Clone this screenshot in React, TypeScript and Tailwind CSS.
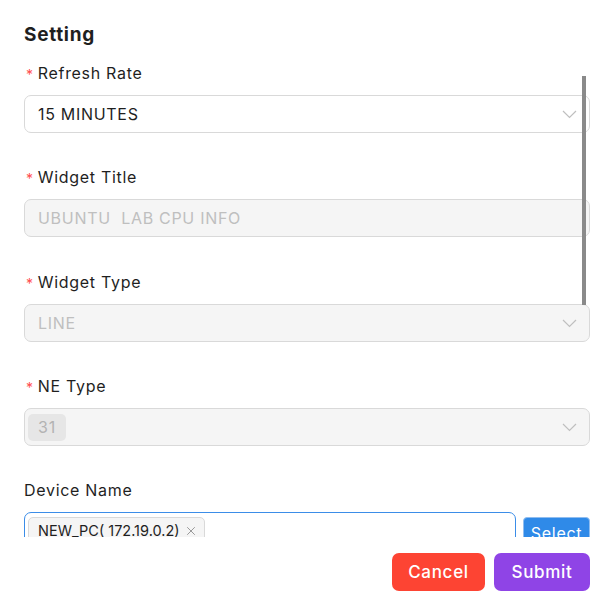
import { X } from "lucide-react";

const font = { fontFamily: "Inter, 'Noto Sans', sans-serif" };

function Chevron() {
  return (
    <svg width="15" height="9" viewBox="0 0 15 9" fill="none" className="text-[#bfbfbf]">
      <path d="M1 1l6.5 6.5L14 1" stroke="currentColor" strokeWidth="1.2" />
    </svg>
  );
}

function Label({ text, required = true }: { text: string; required?: boolean }) {
  return (
    <div className="flex h-6 items-center text-[16px] text-[#1f1f1f]">
      {required && <span className="ml-[2px] mr-[4px] mt-[2px] text-[14px] text-[#ff4d4f]">*</span>}
      {text}
    </div>
  );
}

function Field({
  children,
  disabled,
  chevron,
}: {
  children: React.ReactNode;
  disabled?: boolean;
  chevron?: boolean;
}) {
  return (
    <div
      className={
        "mt-[10px] flex h-[38px] items-center rounded-[7px] border border-[#d9d9d9] pr-[12px] " +
        (disabled ? "bg-[#f5f5f5] text-[#bfbfbf]" : "bg-white text-[#1f1f1f]")
      }
    >
      <div className="flex flex-1 items-center">{children}</div>
      {chevron && <Chevron />}
    </div>
  );
}

export default function App() {
  return (
    <div
      className="flex h-[610px] w-[613px] flex-col bg-white pl-6 pr-[23px] pt-[21px] tracking-[0.7px]"
      style={font}
    >
      <h2 className="h-7 text-[19px] font-bold leading-7 text-[#1f1f1f]">Setting</h2>

      <div className="relative mt-[12px] h-[476px] overflow-hidden">
        <div className="flex flex-col">
          <Label text="Refresh Rate" />
          <Field chevron>
            <span className="pl-[13px] text-[16px]">15 MINUTES</span>
          </Field>

          <div className="mt-[32px]">
            <Label text="Widget Title" />
            <Field disabled>
              <span className="pl-[13px] text-[16px]">UBUNTU&nbsp; LAB CPU INFO</span>
            </Field>
          </div>

          <div className="mt-[33px]">
            <Label text="Widget Type" />
            <Field disabled chevron>
              <span className="pl-[13px] text-[16px]">LINE</span>
            </Field>
          </div>

          <div className="mt-[32px]">
            <Label text="NE Type" />
            <Field disabled chevron>
              <span className="ml-[3px] flex h-[27px] w-[38px] items-center justify-center rounded-[5px] bg-[#e6e6e6] text-[16px] text-[#b3b3b3]">
                31
              </span>
            </Field>
          </div>

          <div className="mt-[32px]">
            <Label text="Device Name" required={false} />
            <div className="mt-[10px] flex gap-[7px]">
              <div className="flex h-[38px] flex-1 items-start rounded-[7px] border border-[#3b8de8] px-[3px] pt-[4px]">
                <span className="flex h-[28px] items-center gap-[4px] rounded-[5px] border border-[#d9d9d9] bg-[#f5f5f5] pl-[9px] pr-[6px] text-[14.5px] tracking-normal text-[#1f1f1f]">
                  NEW_PC( 172.19.0.2)
                  <X className="h-[14px] w-[14px] text-[#8c8c8c]" strokeWidth={1.5} />
                </span>
              </div>
              <button className="mt-[5px] h-[32px] w-[67px] rounded-[4px] border border-[#8fbdf0] bg-[#2f8ae8] text-[16px] text-white">
                Select
              </button>
            </div>
          </div>
        </div>

        <div className="absolute right-[4px] top-[15px] h-[229px] w-[4px] bg-[#8a8a8a]" />
      </div>

      <div className="mt-[16px] flex justify-end gap-[9px]">
        <button className="h-[38px] w-[93px] rounded-[7px] bg-[#fd4433] pt-[2px] text-[17px] font-medium text-white">
          Cancel
        </button>
        <button className="h-[38px] w-[96px] rounded-[7px] bg-[#8f44e6] pt-[2px] text-[17px] font-medium text-white">
          Submit
        </button>
      </div>
    </div>
  );
}
